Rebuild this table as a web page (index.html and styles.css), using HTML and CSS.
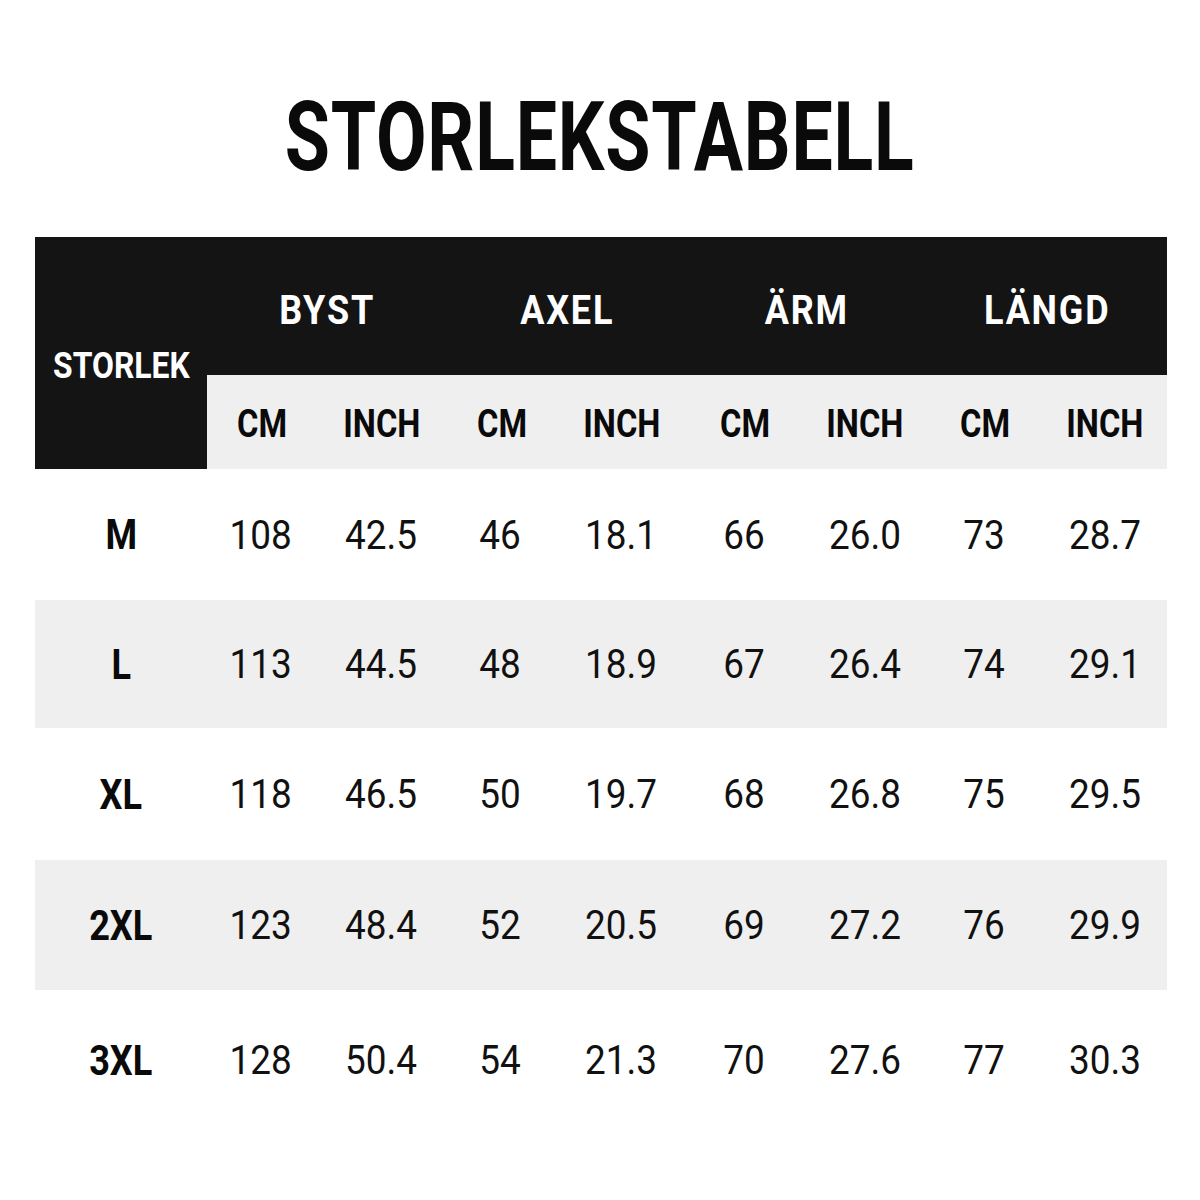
FILE: index.html
```html
<!DOCTYPE html>
<html lang="sv">
<head>
<meta charset="utf-8">
<title>Storlekstabell</title>
<link rel="stylesheet" href="styles.css">
</head>
<body>
<h1 class="title"><span class="title-text">STORLEKSTABELL</span></h1>
<div class="chart">
  <div class="hd size-hd"><span class="t">STORLEK</span></div>
  <div class="hd group"><span class="t">BYST</span></div>
  <div class="hd group"><span class="t">AXEL</span></div>
  <div class="hd group"><span class="t">ÄRM</span></div>
  <div class="hd group"><span class="t">LÄNGD</span></div>
  <div class="sub"><span class="t">CM</span></div>
  <div class="sub"><span class="t">INCH</span></div>
  <div class="sub"><span class="t">CM</span></div>
  <div class="sub"><span class="t">INCH</span></div>
  <div class="sub late"><span class="t">CM</span></div>
  <div class="sub late"><span class="t">INCH</span></div>
  <div class="sub late"><span class="t">CM</span></div>
  <div class="sub late"><span class="t">INCH</span></div>

  <div class="row r1">
    <div class="size"><span class="t">M</span></div>
    <div class="val"><span class="t">108</span></div><div class="val"><span class="t">42.5</span></div>
    <div class="val"><span class="t">46</span></div><div class="val"><span class="t">18.1</span></div>
    <div class="val"><span class="t">66</span></div><div class="val"><span class="t">26.0</span></div>
    <div class="val"><span class="t">73</span></div><div class="val"><span class="t">28.7</span></div>
  </div>
  <div class="row r2 alt">
    <div class="size"><span class="t">L</span></div>
    <div class="val"><span class="t">113</span></div><div class="val"><span class="t">44.5</span></div>
    <div class="val"><span class="t">48</span></div><div class="val"><span class="t">18.9</span></div>
    <div class="val"><span class="t">67</span></div><div class="val"><span class="t">26.4</span></div>
    <div class="val"><span class="t">74</span></div><div class="val"><span class="t">29.1</span></div>
  </div>
  <div class="row r3">
    <div class="size"><span class="t">XL</span></div>
    <div class="val"><span class="t">118</span></div><div class="val"><span class="t">46.5</span></div>
    <div class="val"><span class="t">50</span></div><div class="val"><span class="t">19.7</span></div>
    <div class="val"><span class="t">68</span></div><div class="val"><span class="t">26.8</span></div>
    <div class="val"><span class="t">75</span></div><div class="val"><span class="t">29.5</span></div>
  </div>
  <div class="row r4 alt">
    <div class="size"><span class="t">2XL</span></div>
    <div class="val"><span class="t">123</span></div><div class="val"><span class="t">48.4</span></div>
    <div class="val"><span class="t">52</span></div><div class="val"><span class="t">20.5</span></div>
    <div class="val"><span class="t">69</span></div><div class="val"><span class="t">27.2</span></div>
    <div class="val"><span class="t">76</span></div><div class="val"><span class="t">29.9</span></div>
  </div>
  <div class="row r5">
    <div class="size"><span class="t">3XL</span></div>
    <div class="val"><span class="t">128</span></div><div class="val"><span class="t">50.4</span></div>
    <div class="val"><span class="t">54</span></div><div class="val"><span class="t">21.3</span></div>
    <div class="val"><span class="t">70</span></div><div class="val"><span class="t">27.6</span></div>
    <div class="val"><span class="t">77</span></div><div class="val"><span class="t">30.3</span></div>
  </div>
</div>
</body>
</html>
```

FILE: styles.css
```css
html, body {
  margin: 0;
  padding: 0;
  background: #ffffff;
}
body {
  font-family: Roboto, "Liberation Sans", sans-serif;
  color: #111111;
  width: 1200px;
  height: 1200px;
  overflow: hidden;
}
.title {
  margin: 0;
  height: 237px;
  box-sizing: border-box;
  padding-top: 82px;
  text-align: center;
  font-size: 96px;
  line-height: 110px;
  font-weight: 700;
  color: #0a0a0a;
}
.title-text {
  display: inline-block;
  transform: scaleX(0.765);
  letter-spacing: 1px;
}
.chart {
  margin-left: 35px;
  width: 1132px;
  display: grid;
  grid-template-columns: 172px repeat(8, 120px);
  grid-template-rows: 138px 94px;
}
.t {
  display: inline-block;
  transform: scaleX(0.86);
}
.hd {
  background: #141414;
  color: #ffffff;
  font-weight: 700;
  display: flex;
  align-items: center;
  justify-content: center;
}
.size-hd {
  grid-row: 1 / span 2;
  grid-column: 1;
  font-size: 37px;
  padding-top: 24px;
}
.group {
  grid-column: span 2;
  font-size: 40px;
  letter-spacing: 2px;
  padding-top: 8px;
}
.group .t {
  transform: scaleX(0.9);
}
.sub {
  background: #efefef;
  color: #0a0a0a;
  font-weight: 700;
  font-size: 38px;
  display: flex;
  align-items: center;
  justify-content: center;
  padding-right: 10px;
  padding-top: 4px;
}
.sub.late {
  padding-right: 4px;
}
.row {
  grid-column: 1 / -1;
  display: grid;
  grid-template-columns: 172px repeat(8, 120px);
}
.r1 { height: 131px; }
.r2 { height: 128px; }
.r3 { height: 132px; }
.r4 { height: 130px; }
.r5 { height: 140px; }
.alt {
  background: #efefef;
}
.size, .val {
  display: flex;
  align-items: center;
  justify-content: center;
}
.size {
  font-weight: 700;
  font-size: 42px;
  color: #0a0a0a;
}
.val {
  font-weight: 400;
  font-size: 41px;
  color: #111111;
  padding-right: 13px;
}
.val:nth-child(n+6) {
  padding-right: 5px;
}
.val .t {
  transform: scaleX(0.9);
}
```
